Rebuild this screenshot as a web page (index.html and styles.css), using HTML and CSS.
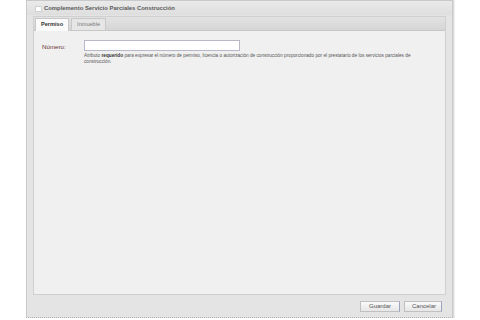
FILE: index.html
```html
<!DOCTYPE html>
<html lang="es">
<head>
    <meta charset="UTF-8">
    <title>Complemento Servicio Parciales Construcción</title>
    <link rel="stylesheet" href="styles.css">
</head>
<body>
    <div class="dialog">
        <div class="titlebar">
            <span class="title-icon"></span>
            <span class="title">Complemento Servicio Parciales Construcción</span>
        </div>
        <div class="tabs">
            <div class="tab-nav">
                <div class="tab active">Permiso</div>
                <div class="tab">Inmueble</div>
            </div>
            <div class="tab-content">
                <div class="field">
                    <label for="numero">Número:</label>
                    <div class="field-body">
                        <input type="text" id="numero">
                        <div class="hint">Atributo <b>requerido</b> para expresar el número de permiso, licencia o autorización de construcción proporcionado por el prestatario de los servicios parciales de construcción.</div>
                    </div>
                </div>
            </div>
        </div>
        <div class="buttons">
            <button>Guardar</button>
            <button>Cancelar</button>
        </div>
    </div>
</body>
</html>
```

FILE: styles.css
```css
body {
    margin: 0;
    background: #ffffff;
    font-family: 'Liberation Sans', Arial, sans-serif;
    color: #333;
}
.dialog {
    margin-left: 26px;
    width: 425px;
    height: 316px;
    border: 1px solid #c9c9c9;
    border-bottom: 1px dotted #b0b0b0;
    box-shadow: 1px 0 0 #dcdcdc, 2px 0 0 #eeeeee;
    background: #e4e4e4;
    display: flex;
    flex-direction: column;
}
.titlebar {
    height: 14px;
    display: flex;
    align-items: center;
    padding-left: 8px;
    background: linear-gradient(#eaeaea, #dedede);
}
.title-icon {
    width: 5px;
    height: 4px;
    background: #fff;
    border: 1px solid #d0d0d0;
    margin-right: 2px;
    margin-top: 2px;
}
.title {
    font-size: 5.9px;
    font-weight: bold;
    color: #5a5a5a;
}
.tabs {
    margin: 1px 6px 0 6px;
    flex: 1;
    display: flex;
    flex-direction: column;
    border: 1px solid #d0d0d0;
    background: #f0f0f0;
}
.tab-nav {
    height: 13px;
    display: flex;
    align-items: flex-end;
    gap: 2px;
    padding-left: 1px;
    background: linear-gradient(#e2e2e2, #d6d6d6);
    border-bottom: 1px solid #c8c8c8;
}
.tab {
    height: 11px;
    line-height: 11px;
    padding: 0 5px;
    font-size: 5.6px;
    color: #777;
    border: 1px solid #c8c8c8;
    border-bottom: none;
    background: #e6e6e6;
}
.tab.active {
    color: #333;
    font-weight: bold;
    background: #fafafa;
    height: 12px;
    margin-bottom: -1px;
}
.tab-content {
    flex: 1;
    padding: 9px 8px;
}
.field {
    display: flex;
}
label {
    width: 42px;
    font-size: 6.2px;
    color: #6a3434;
    padding-top: 3px;
}
input {
    display: block;
    width: 154px;
    height: 9px;
    margin: 0;
    padding: 0;
    border: 1px solid #b8b8c8;
    background: #fff;
}
.hint {
    width: 328px;
    font-size: 4.7px;
    line-height: 6px;
    color: #555;
    margin-top: 2px;
}
.hint b {
    color: #333;
}
.buttons {
    height: 22px;
    display: flex;
    justify-content: flex-end;
    align-items: center;
    gap: 4px;
    padding-right: 10px;
}
button {
    height: 11px;
    padding: 0 7px;
    font-family: inherit;
    font-size: 6px;
    color: #555;
    border: 1px solid #c0c0c0;
    border-right-color: #9aa4c0;
    background: linear-gradient(#fafafa, #e6e6e6);
}
button:first-child {
    width: 40px;
}
button:last-child {
    width: 38px;
}
```
